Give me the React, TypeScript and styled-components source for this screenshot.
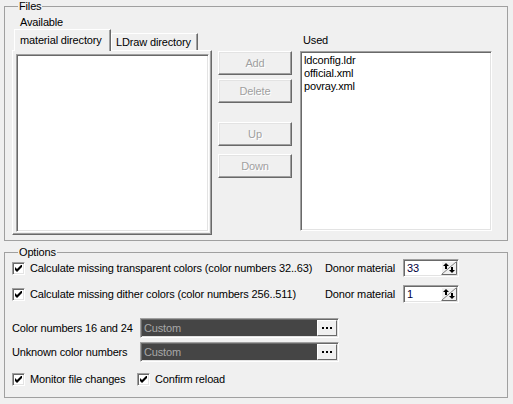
import React from 'react';
import styled, { createGlobalStyle } from 'styled-components';

const GlobalStyle = createGlobalStyle`
  html, body {
    margin: 0;
    padding: 0;
    background: #f0f0f0;
  }
  body {
    font-family: "Liberation Sans", Arial, sans-serif;
    font-size: 11px;
    letter-spacing: -0.15px;
    color: #000;
  }
`;

const Window = styled.div`
  width: 513px;
  height: 404px;
  box-sizing: border-box;
  padding: 0 5px 0 4px;
  display: flex;
  flex-direction: column;
`;

const Group = styled.fieldset<{ $h: number; $mt: number }>`
  margin: ${(p) => p.$mt}px 0 0 0;
  padding: 0 7px;
  border: 1px solid #a0a0a0;
  height: ${(p) => p.$h}px;
  box-sizing: border-box;
  min-width: 0;
`;

const Legend = styled.legend`
  padding: 0 1px;
  margin-left: 6px;
  line-height: 13px;
`;

const FilesRow = styled.div`
  display: flex;
  align-items: flex-start;
`;

const LeftCol = styled.div`
  width: 200px;
  display: flex;
  flex-direction: column;
`;

const Caption = styled.div<{ $indent: number }>`
  padding-left: ${(p) => p.$indent}px;
  height: 13px;
  line-height: 13px;
`;

const TabStrip = styled.div`
  display: flex;
  align-items: flex-end;
  height: 21px;
  padding-left: 2px;
  position: relative;
  z-index: 1;
`;

const Tab = styled.div<{ $active?: boolean; $w: number }>`
  box-sizing: border-box;
  width: ${(p) => p.$w}px;
  height: ${(p) => (p.$active ? 22 : 17)}px;
  margin-bottom: ${(p) => (p.$active ? -1 : 0)}px;
  padding: ${(p) => (p.$active ? '4px 0 0 5px' : '2px 0 0 4px')};
  background: #f0f0f0;
  border: 1px solid #fff;
  border-bottom: none;
  border-right: 1px solid #696969;
  box-shadow: inset -1px 0 0 #a0a0a0;
  white-space: nowrap;
`;

const TabPanel = styled.div`
  box-sizing: border-box;
  height: 185px;
  border-top: 1px solid #fff;
  border-left: 1px solid #fff;
  border-right: 1px solid #696969;
  border-bottom: 1px solid #696969;
  box-shadow: inset -1px -1px 0 #a0a0a0;
  padding: 3px 2px 2px 3px;
`;

const ListBox = styled.div<{ $w?: number; $h: number }>`
  box-sizing: border-box;
  width: ${(p) => (p.$w ? `${p.$w}px` : 'auto')};
  height: ${(p) => p.$h}px;
  background: #fff;
  border-top: 1px solid #a0a0a0;
  border-left: 1px solid #a0a0a0;
  border-right: 1px solid #fff;
  border-bottom: 1px solid #fff;
  box-shadow: inset 1px 1px 0 #696969, inset -1px -1px 0 #e3e3e3;
  padding: 2px 3px;
`;

const Item = styled.div`
  line-height: 13px;
  color: #000;
`;

const ButtonCol = styled.div`
  display: flex;
  flex-direction: column;
  margin: 38px 0 0 6px;
  width: 74px;
`;

const Button = styled.button<{ $gap: number }>`
  box-sizing: border-box;
  width: 74px;
  height: 24px;
  margin-top: ${(p) => p.$gap}px;
  padding: 0;
  background: #f0f0f0;
  border-top: 1px solid #fff;
  border-left: 1px solid #fff;
  border-right: 1px solid #696969;
  border-bottom: 1px solid #696969;
  box-shadow: inset -1px -1px 0 #a0a0a0, inset 1px 1px 0 #e3e3e3;
  font: inherit;
  letter-spacing: inherit;
  color: #a0a0a0;
  text-shadow: 1px 1px 0 #fff;
`;

const RightCol = styled.div`
  display: flex;
  flex-direction: column;
  margin: 21px 0 0 8px;
`;

const OptRow = styled.div<{ $mt: number }>`
  display: flex;
  align-items: center;
  margin-top: ${(p) => p.$mt}px;
  height: 18px;
`;

const CheckLabel = styled.label<{ $w?: number }>`
  display: flex;
  align-items: center;
  gap: 5px;
  width: ${(p) => (p.$w ? `${p.$w}px` : 'auto')};
  white-space: nowrap;
`;

const Box = styled.span`
  box-sizing: border-box;
  width: 13px;
  height: 13px;
  background: #fff;
  border-top: 1px solid #a0a0a0;
  border-left: 1px solid #a0a0a0;
  border-right: 1px solid #fff;
  border-bottom: 1px solid #fff;
  box-shadow: inset 1px 1px 0 #696969, inset -1px -1px 0 #e3e3e3;
  display: flex;
  align-items: center;
  justify-content: center;
`;

const TextLabel = styled.span<{ $w: number }>`
  width: ${(p) => p.$w}px;
  white-space: nowrap;
`;

const SpinEdit = styled.div`
  box-sizing: border-box;
  width: 56px;
  height: 18px;
  background: #fff;
  border-top: 1px solid #a0a0a0;
  border-left: 1px solid #a0a0a0;
  border-right: 1px solid #fff;
  border-bottom: 1px solid #fff;
  box-shadow: inset 1px 1px 0 #696969, inset -1px -1px 0 #e3e3e3;
  display: flex;
  align-items: center;
  justify-content: space-between;
  padding: 0 1px 0 3px;
  color: #000040;
`;

const ComboRow = styled.div<{ $mt: number }>`
  display: flex;
  align-items: center;
  height: 20px;
  margin-top: ${(p) => p.$mt}px;
`;

const DarkBox = styled.div`
  box-sizing: border-box;
  width: 199px;
  height: 20px;
  background: #454545;
  border-top: 1px solid #a0a0a0;
  border-left: 1px solid #a0a0a0;
  border-right: 1px solid #fff;
  border-bottom: 1px solid #fff;
  box-shadow: inset 1px 1px 0 #696969, inset -1px -1px 0 #e3e3e3;
  display: flex;
  align-items: center;
  justify-content: space-between;
  padding: 1px 1px 1px 3px;
  color: #a8a8a8;
`;

const DotsButton = styled.div`
  box-sizing: border-box;
  width: 20px;
  height: 16px;
  background: #f0f0f0;
  border-top: 1px solid #fff;
  border-left: 1px solid #fff;
  border-right: 1px solid #696969;
  border-bottom: 1px solid #696969;
  display: flex;
  align-items: center;
  justify-content: center;
  gap: 2px;
`;

const Dot = styled.span`
  width: 2px;
  height: 2px;
  background: #000;
`;

const Check = () => (
  <Box>
    <svg width="7" height="7" viewBox="0 0 7 7">
      <path d="M0 2v3l2 2l5-5v-3l-5 5z" fill="#000" />
    </svg>
  </Box>
);

const SpinArrows = () => (
  <svg width="16" height="14" viewBox="0 0 16 14">
    <rect x="0" y="0" width="16" height="14" fill="#f0f0f0" />
    <path d="M0.5 13.5V0.5H15.5" stroke="#fff" fill="none" />
    <path d="M0.5 13.5H15.5V0.5" stroke="#696969" fill="none" />
    <path d="M1 13L15 1" stroke="#808080" />
    <path d="M2 5l3-3l3 3z" fill="#000" />
    <rect x="4" y="4" width="2" height="4" fill="#000" />
    <path d="M8 9l3 3l3-3z" fill="#000" />
    <rect x="10" y="6" width="2" height="4" fill="#000" />
  </svg>
);

const Spin = ({ value }: { value: string }) => (
  <SpinEdit>
    <span>{value}</span>
    <SpinArrows />
  </SpinEdit>
);

const Combo = () => (
  <DarkBox>
    <span>Custom</span>
    <DotsButton>
      <Dot />
      <Dot />
      <Dot />
    </DotsButton>
  </DarkBox>
);

export default function App() {
  return (
    <>
      <GlobalStyle />
      <Window>
        <Group $h={241} $mt={0}>
          <Legend>Files</Legend>
          <FilesRow>
            <LeftCol>
              <Caption $indent={8} style={{ marginTop: 3 }}>Available</Caption>
              <TabStrip>
                <Tab $active $w={97}>material directory</Tab>
                <Tab $w={87}>LDraw directory</Tab>
              </TabStrip>
              <TabPanel>
                <ListBox $h={178} />
              </TabPanel>
            </LeftCol>
            <ButtonCol>
              <Button $gap={0} disabled>Add</Button>
              <Button $gap={4} disabled>Delete</Button>
              <Button $gap={19} disabled>Up</Button>
              <Button $gap={8} disabled>Down</Button>
            </ButtonCol>
            <RightCol>
              <Caption $indent={3}>Used</Caption>
              <ListBox $w={192} $h={180} style={{ marginTop: 4 }}>
                <Item>ldconfig.ldr</Item>
                <Item>official.xml</Item>
                <Item>povray.xml</Item>
              </ListBox>
            </RightCol>
          </FilesRow>
        </Group>
        <Group $h={152} $mt={5}>
          <Legend>Options</Legend>
          <OptRow $mt={0}>
            <CheckLabel $w={313}>
              <Check />
              Calculate missing transparent colors (color numbers 32..63)
            </CheckLabel>
            <TextLabel $w={78}>Donor material</TextLabel>
            <Spin value="33" />
          </OptRow>
          <OptRow $mt={8}>
            <CheckLabel $w={313}>
              <Check />
              Calculate missing dither colors (color numbers 256..511)
            </CheckLabel>
            <TextLabel $w={78}>Donor material</TextLabel>
            <Spin value="1" />
          </OptRow>
          <ComboRow $mt={15}>
            <TextLabel $w={128}>Color numbers 16 and 24</TextLabel>
            <Combo />
          </ComboRow>
          <ComboRow $mt={4}>
            <TextLabel $w={128}>Unknown color numbers</TextLabel>
            <Combo />
          </ComboRow>
          <OptRow $mt={8}>
            <CheckLabel $w={125}>
              <Check />
              Monitor file changes
            </CheckLabel>
            <CheckLabel>
              <Check />
              Confirm reload
            </CheckLabel>
          </OptRow>
        </Group>
      </Window>
    </>
  );
}
